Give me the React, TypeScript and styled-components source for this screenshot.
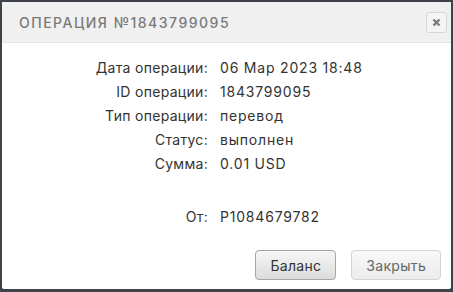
import React from "react";
import styled, { createGlobalStyle } from "styled-components";

const Global = createGlobalStyle`
  html, body { margin: 0; padding: 0; background: #3d4348; }
  body { width: 453px; height: 292px; overflow: hidden; }
`;

const Frame = styled.div`
  width: 453px;
  height: 292px;
  box-sizing: border-box;
  padding: 2px 2px 3px 2px;
  background: #3d4348;
`;

const Dialog = styled.div`
  height: 100%;
  background: #fff;
  border-radius: 2px;
  display: flex;
  flex-direction: column;
  font-family: "Inter", "Open Sans", sans-serif;
`;

const Header = styled.div`
  height: 41px;
  box-sizing: border-box;
  background: #f0f0f0;
  border-bottom: 1px solid #e4e4e4;
  display: flex;
  align-items: center;
  justify-content: space-between;
  padding: 0 4px 0 17px;
`;

const Title = styled.div`
  font-size: 14px;
  color: #7a7a7a;
  letter-spacing: 1.5px;
  font-weight: 500;
`;

const CloseBtn = styled.div`
  width: 19px;
  height: 19px;
  border: 1px solid #d6d6d6;
  border-radius: 3px;
  background: #f4f4f4;
  display: flex;
  align-items: center;
  justify-content: center;
`;

const Body = styled.div`
  flex: 1;
  display: flex;
  flex-direction: column;
  padding-top: 13px;
`;

const Grid = styled.div`
  display: grid;
  grid-template-columns: 206px 1fr;
  column-gap: 12px;
  font-size: 14px;
  color: #333;
`;

const Label = styled.div<{ $gap?: number }>`
  text-align: right;
  line-height: 24px;
  letter-spacing: 0.3px;
  margin-top: ${(p) => p.$gap ?? 0}px;
`;

const Value = styled.div<{ $gap?: number }>`
  line-height: 24px;
  letter-spacing: 0.8px;
  margin-top: ${(p) => p.$gap ?? 0}px;
`;

const Footer = styled.div`
  margin-top: auto;
  display: flex;
  justify-content: flex-end;
  gap: 15px;
  padding: 0 10px 9px 0;
`;

const Button = styled.button<{ $primary?: boolean }>`
  height: 30px;
  padding: 0 14px;
  border-radius: 4px;
  font-family: "Inter", "Open Sans", sans-serif;
  font-size: 14px;
  letter-spacing: 0.3px;
  border: 1px solid ${(p) => (p.$primary ? "#a5a5a5" : "#d3d3d3")};
  color: ${(p) => (p.$primary ? "#333" : "#666")};
  background: ${(p) =>
    p.$primary
      ? "linear-gradient(#f6f6f6, #e9e9e9 50%, #dcdcdc)"
      : "linear-gradient(#fafafa, #f1f1f1 50%, #ececec)"};
`;

const rows: [string, string][] = [
  ["Дата операции:", "06 Мар 2023 18:48"],
  ["ID операции:", "1843799095"],
  ["Тип операции:", "перевод"],
  ["Статус:", "выполнен"],
  ["Сумма:", "0.01 USD"],
];

export default function App() {
  return (
    <Frame>
      <Global />
      <Dialog>
        <Header>
          <Title>ОПЕРАЦИЯ №1843799095</Title>
          <CloseBtn>
            <svg width="9" height="9" viewBox="0 0 9 9">
              <path d="M1.5 1.5 L7.5 7.5 M7.5 1.5 L1.5 7.5" stroke="#7a7a7a" strokeWidth="2.4" strokeLinecap="butt" />
            </svg>
          </CloseBtn>
        </Header>
        <Body>
          <Grid>
            {rows.map(([l, v]) => (
              <React.Fragment key={l}>
                <Label>{l}</Label>
                <Value>{v}</Value>
              </React.Fragment>
            ))}
            <Label $gap={29}>От:</Label>
            <Value $gap={29}>P1084679782</Value>
          </Grid>
          <Footer>
            <Button $primary>Баланс</Button>
            <Button>Закрыть</Button>
          </Footer>
        </Body>
      </Dialog>
    </Frame>
  );
}
